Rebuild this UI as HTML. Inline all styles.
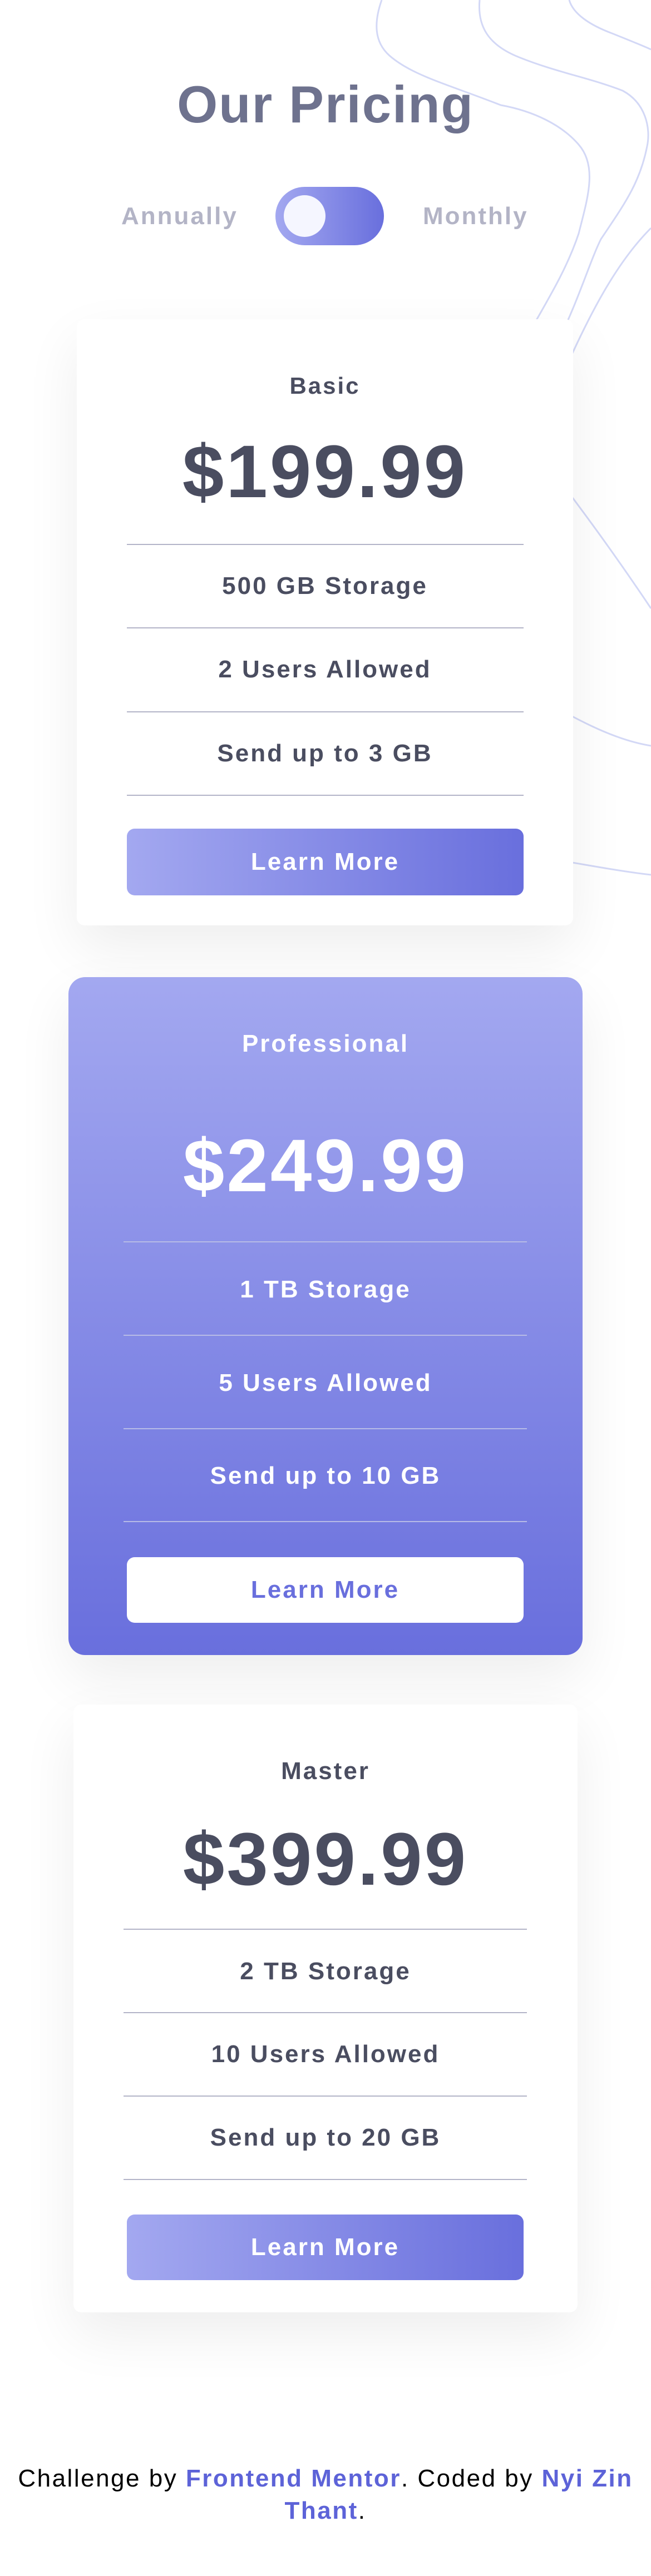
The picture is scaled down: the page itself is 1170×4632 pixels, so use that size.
<!DOCTYPE html>
<html><head><meta charset="utf-8"><style>
*{margin:0;padding:0;box-sizing:border-box}
html,body{width:1170px;height:4632px;background:#fff;overflow:hidden}
body{position:relative;font-family:"Liberation Sans",sans-serif;font-weight:bold;color:#4a4d60}
svg.bg{position:absolute;left:0;top:0}
h1{position:absolute;left:0;width:1170px;top:128px;text-align:center;font-size:94px;color:#6e728e;letter-spacing:2px;line-height:120px}
.lbl{position:absolute;top:364px;font-size:44px;color:#b3b4c6;line-height:50px;letter-spacing:3px}
.tog{position:absolute;left:495px;top:336px;width:195px;height:105px;border-radius:53px;background:linear-gradient(90deg,#a3a8f0,#696fdd)}
.knob{position:absolute;left:15px;top:15px;width:75px;height:75px;border-radius:50%;background:#f5f6ff}
.card{position:absolute;background:#fff;box-shadow:0 40px 100px rgba(0,0,0,0.07);border-radius:20px}
.card .t{position:absolute;left:0;right:0;text-align:center;letter-spacing:3px}
.line{position:absolute;height:2px;background:#b3b4c8}
.btn{position:absolute;border-radius:14px;background:linear-gradient(90deg,#a3a8f0,#696fdd);color:#fff;text-align:center;font-size:44px;letter-spacing:3px}
.pro{background:linear-gradient(180deg,#a3a8f0,#696fdd);color:#fff;border-radius:30px}
.pro .line{background:#b7bbe6}
.foot{position:absolute;left:0;width:1170px;top:4428px;text-align:center;font-size:44px;line-height:58px;color:#000;font-weight:normal;letter-spacing:2.5px}
.foot b{color:#5d63d8}
</style></head><body>
<svg class="bg" width="1170" height="1700" viewBox="0 0 1170 1700" fill="none" stroke="#d3d8f6" stroke-width="3">
<path d="M686 0 C672 40 672 75 700 100 C740 135 800 150 900 189 C960 200 1010 225 1040 260 C1075 300 1055 360 1040 420 C1020 480 990 530 950 600"/>
<path d="M862 0 C858 45 875 80 933 103 C1000 130 1060 140 1119 163 C1160 185 1170 230 1163 263 C1150 330 1120 370 1080 430 C1060 470 1040 540 1000 620"/>
<path d="M1023 0 C1030 25 1060 45 1100 60 C1130 72 1155 82 1170 89"/>
<path d="M1170 410 C1110 470 1060 560 1000 700"/>
<path d="M960 800 C1000 860 1060 930 1170 1094"/>
<path d="M960 1250 C1030 1290 1100 1330 1170 1341"/>
<path d="M960 1540 C1030 1550 1100 1565 1170 1573"/>
</svg>
<h1>Our Pricing</h1>
<div class="lbl" style="left:218px">Annually</div>
<div class="tog"><div class="knob"></div></div>
<div class="lbl" style="left:760px">Monthly</div>

<div class="card" style="left:138px;top:574px;width:892px;height:1090px;border-radius:14px">
 <div class="t" style="top:92px;font-size:42px;line-height:56px">Basic</div>
 <div class="t" style="top:200px;font-size:134px;line-height:150px;letter-spacing:4px">$199.99</div>
 <div class="line" style="left:90px;width:713px;top:404px"></div>
 <div class="t" style="top:454px;font-size:44px;line-height:52px">500 GB Storage</div>
 <div class="line" style="left:90px;width:713px;top:554px"></div>
 <div class="t" style="top:604px;font-size:44px;line-height:52px">2 Users Allowed</div>
 <div class="line" style="left:90px;width:713px;top:705px"></div>
 <div class="t" style="top:755px;font-size:44px;line-height:52px">Send up to 3 GB</div>
 <div class="line" style="left:90px;width:713px;top:855px"></div>
 <div class="btn" style="left:90px;width:713px;top:916px;height:120px;line-height:120px">Learn More</div>
</div>

<div class="card pro" style="left:123px;top:1757px;width:924px;height:1219px">
 <div class="t" style="top:94px;font-size:44px;line-height:52px">Professional</div>
 <div class="t" style="top:265px;font-size:134px;line-height:150px;letter-spacing:4px">$249.99</div>
 <div class="line" style="left:99px;width:725px;top:475px"></div>
 <div class="t" style="top:536px;font-size:44px;line-height:52px">1 TB Storage</div>
 <div class="line" style="left:99px;width:725px;top:643px"></div>
 <div class="t" style="top:704px;font-size:44px;line-height:52px">5 Users Allowed</div>
 <div class="line" style="left:99px;width:725px;top:811px"></div>
 <div class="t" style="top:871px;font-size:44px;line-height:52px">Send up to 10 GB</div>
 <div class="line" style="left:99px;width:725px;top:978px"></div>
 <div class="btn" style="left:105px;width:713px;top:1043px;height:118px;line-height:118px;background:#fff;color:#696fdd">Learn More</div>
</div>

<div class="card" style="left:132px;top:3065px;width:906px;height:1093px;border-radius:14px">
 <div class="t" style="top:94px;font-size:44px;line-height:52px">Master</div>
 <div class="t" style="top:204px;font-size:134px;line-height:150px;letter-spacing:4px">$399.99</div>
 <div class="line" style="left:90px;width:725px;top:403px"></div>
 <div class="t" style="top:454px;font-size:44px;line-height:52px">2 TB Storage</div>
 <div class="line" style="left:90px;width:725px;top:553px"></div>
 <div class="t" style="top:603px;font-size:44px;line-height:52px">10 Users Allowed</div>
 <div class="line" style="left:90px;width:725px;top:703px"></div>
 <div class="t" style="top:753px;font-size:44px;line-height:52px">Send up to 20 GB</div>
 <div class="line" style="left:90px;width:725px;top:853px"></div>
 <div class="btn" style="left:96px;width:713px;top:917px;height:118px;line-height:118px">Learn More</div>
</div>

<div class="foot">Challenge by <b>Frontend Mentor</b>. Coded by <b>Nyi Zin<br>Thant</b>.</div>
</body></html>
